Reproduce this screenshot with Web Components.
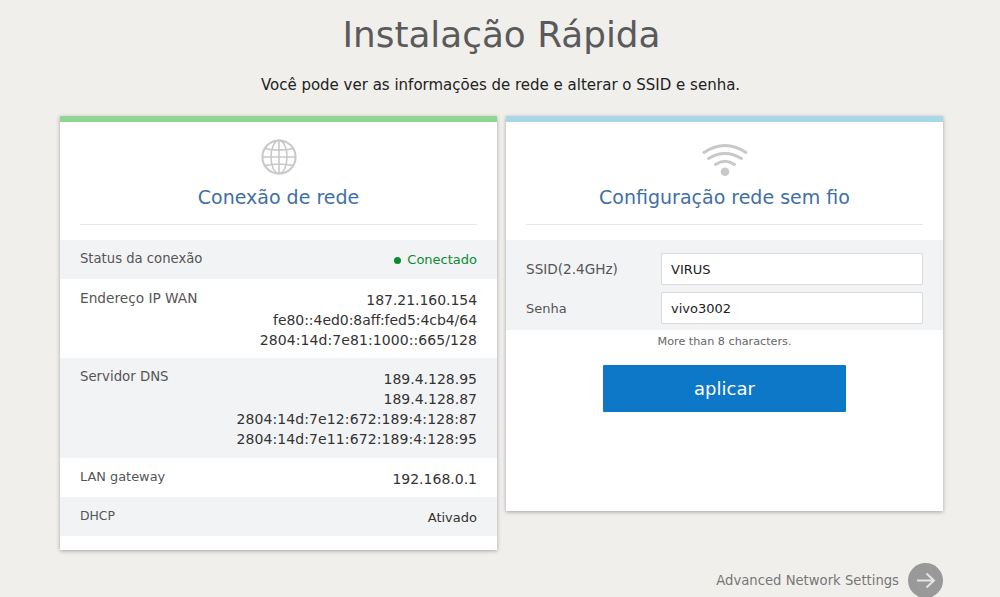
<!DOCTYPE html>
<html lang="pt"><head><meta charset="utf-8"><title>Instalação Rápida</title>
<style>
html,body{margin:0;padding:0;height:597px;overflow:hidden;background:#f0efec;font-family:"DejaVu Sans",sans-serif}
</style></head><body>
<qs-page>
  <span slot="title">Instalação Rápida</span>
  <span slot="sub">Você pode ver as informações de rede e alterar o SSID e senha.</span>
  <qs-card slot="left" accent="#8fd694" heading="Conexão de rede">
    <svg slot="icon" width="36" height="36" viewBox="0 0 36 36" fill="none" stroke="#c8c8c8" stroke-width="1.6"><circle cx="18" cy="18" r="16.6" stroke-width="2"/><ellipse cx="18" cy="18" rx="8" ry="16.6"/><path d="M18 1.4V34.6M1.4 18H34.6M4 9.5C12 11.6 24 11.6 32 9.5M4 26.5C12 24.4 24 24.4 32 26.5"/></svg>
    <qs-row label="Status da conexão" fs="13.2" h="39" shade><span style="color:#0b8a34;display:flex;align-items:center;gap:6.5px;font-size:13px;margin-top:-1px"><i style="width:7px;height:7px;border-radius:50%;background:#0b8a34;display:block"></i>Conectado</span></qs-row>
    <qs-row label="Endereço IP WAN" fs="13.7" h="79"><div style="letter-spacing:-.05px">187.21.160.154</div><div style="letter-spacing:-.05px">fe80::4ed0:8aff:fed5:4cb4/64</div><div style="letter-spacing:.08px">2804:14d:7e81:1000::665/128</div></qs-row>
    <qs-row label="Servidor DNS" fs="13.3" h="100" shade><div>189.4.128.95</div><div>189.4.128.87</div><div style="letter-spacing:.1px">2804:14d:7e12:672:189:4:128:87</div><div style="letter-spacing:.1px">2804:14d:7e11:672:189:4:128:95</div></qs-row>
    <qs-row label="LAN gateway" fs="12.9" h="39"><div>192.168.0.1</div></qs-row>
    <qs-row label="DHCP" fs="12.4" h="39" shade><div style="font-size:13px">Ativado</div></qs-row>
    <div style="height:14px"></div>
  </qs-card>
  <qs-card slot="right" accent="#a8d8e8" heading="Configuração rede sem fio">
    <svg slot="icon" width="48" height="38" viewBox="0 0 48 38" fill="none" stroke="#c8c8c8" stroke-width="3" stroke-linecap="round"><path d="M3 13.5Q24 -.5 45 13.5"/><path d="M7.5 19.5Q24 9.5 40.5 19.5"/><path d="M14.5 25.5Q24 19 33.5 25.5"/><circle cx="24" cy="32.7" r="4.3" fill="#c8c8c8" stroke="none"/></svg>
    <qs-form></qs-form>
  </qs-card>
  <qs-advanced slot="foot">Advanced Network Settings</qs-advanced>
</qs-page>
<script>
function def(name, html, extra){
  customElements.define(name, class extends HTMLElement{
    constructor(){super();this.attachShadow({mode:'open'}).innerHTML=html;}
    connectedCallback(){extra&&extra.call(this,this.shadowRoot);}
  });
}
def('qs-page',`<style>
:host{display:block;width:1000px;height:597px;overflow:hidden;box-sizing:border-box;padding:0 57px 0 60px}
h1{margin:0;height:68px;line-height:68px;padding-top:1px;box-sizing:border-box;text-align:center;font-weight:400;font-size:35.8px;color:#5a5a5a}
p{margin:0 2px 0 0;height:48px;padding-top:4px;box-sizing:border-box;line-height:26px;text-align:center;font-size:15px;color:#222}
.cards{display:flex;gap:9px;align-items:flex-start}
.cards ::slotted(*){width:437px}
.foot{display:flex;justify-content:flex-end;margin-top:13px}
</style><h1><slot name="title"></slot></h1><p><slot name="sub"></slot></p>
<div class="cards"><slot name="left"></slot><slot name="right"></slot></div>
<div class="foot"><slot name="foot"></slot></div>`);
def('qs-card',`<style>
:host{display:block;background:#fff;box-shadow:0 1px 4px rgba(0,0,0,.32);border-top:6px solid var(--a)}
.icon{height:48px;padding-top:17px;box-sizing:content-box;display:flex;justify-content:center;align-items:flex-start}
h2{margin:0 20px 15px;height:25px;border-bottom:1px solid #e6e6e6;padding-bottom:12px;box-sizing:content-box;text-align:center;font-weight:400;font-size:19px;line-height:20px;color:#3f6fa5}
</style><div class="icon"><slot name="icon"></slot></div><h2></h2><slot></slot>`,function(s){
  s.querySelector('h2').textContent=this.getAttribute('heading');
  this.style.setProperty('--a',this.getAttribute('accent'));
});
def('qs-row',`<style>
:host{display:flex;justify-content:space-between;box-sizing:border-box;padding:0 20px;font-size:14px;line-height:20px}
:host([shade]){background:#f2f3f5}
.l{color:#555;padding-top:9px}
.v{color:#333;text-align:right;padding-top:11px}
</style><div class="l"></div><div class="v"><slot></slot></div>`,function(s){
  const l=s.querySelector('.l');
  l.textContent=this.getAttribute('label');
  l.style.fontSize=this.getAttribute('fs')+'px';
  this.style.height=this.getAttribute('h')+'px';
});
def('qs-form',`<style>
:host{display:block}
.g{background:#f2f3f5;height:90px;box-sizing:border-box;padding:13px 20px 0;display:grid;grid-template-columns:135px 262px;grid-auto-rows:32px;row-gap:7px;font-size:13px;color:#555}
label{display:flex;align-items:center}
input{box-sizing:border-box;width:262px;height:32px;border:1px solid #dcdcdc;border-radius:2px;padding:0 9px;font:13px "DejaVu Sans",sans-serif;color:#222;background:#fff;outline:none;box-shadow:0 0 1px rgba(0,0,0,.1)}
.n{text-align:center;font-size:11.2px;color:#666;height:35px;line-height:24px}
.b{display:flex;justify-content:center;padding-bottom:99px}
button{width:243px;height:47px;border:0;background:#0d77c8;color:#fff;font:18px "DejaVu Sans",sans-serif;padding:0;border-radius:1px}
</style><div class="g"><label for="a" style="font-size:13.6px">SSID(2.4GHz)</label><input id="a" value="VIRUS"><label for="b">Senha</label><input id="b" value="vivo3002"></div>
<div class="n">More than 8 characters.</div><div class="b"><button>aplicar</button></div>`);
def('qs-advanced',`<style>
:host{display:flex;align-items:center;gap:9px;font-size:13.2px;color:#777}
svg{display:block}
</style><slot></slot><svg width="35" height="35" viewBox="0 0 35 35"><circle cx="17.5" cy="17.5" r="17.5" fill="#999"/><path d="M9 17.5H26M18.5 10.5L26 17.5L18.5 24.5" fill="none" stroke="#e6e6e6" stroke-width="2"/></svg>`);
</script>
</body></html>
